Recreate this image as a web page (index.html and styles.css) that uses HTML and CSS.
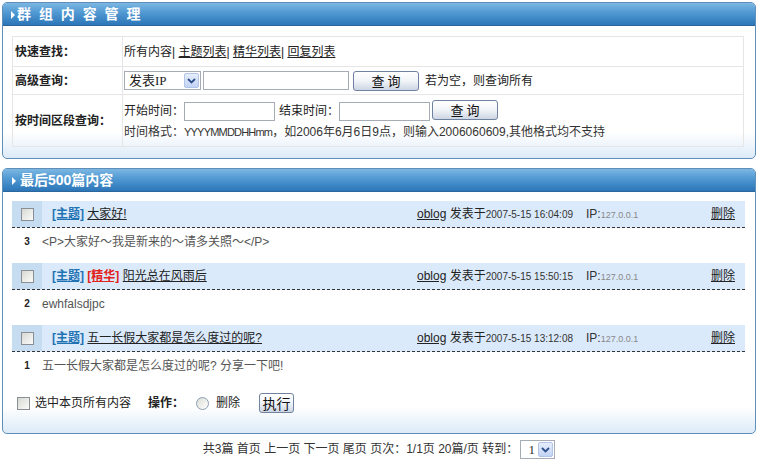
FILE: index.html
```html
<!doctype html>
<html>
<head>
	<meta charset="utf-8"/>
	<title>群组内容管理</title>
	<link rel="stylesheet" href="styles.css">
</head>
<body>

	<div class="panel">
		<div class="panel-title"><span class="tri"></span>群 组 内 容 管 理</div>
		<div class="panel-body">
			<table class="search">
				<tr class="row-quick">
					<td class="label">快速查找：</td>
					<td>所有内容| <a href="#">主题列表</a>| <a href="#">精华列表</a>| <a href="#">回复列表</a></td>
				</tr>
				<tr class="row-adv">
					<td class="label">高级查询：</td>
					<td>
						<div class="line">
							<span class="select select-ip"><span class="select-text">发表IP</span><span class="select-btn"><svg width="9" height="6" viewBox="0 0 9 6"><path d="M1 1 L4.5 4.5 L8 1" fill="none" stroke="#2d4f8a" stroke-width="1.8"/></svg></span></span>
							<input type="text" class="txt txt-key"/>
							<button class="btn btn-query">查 询</button>
							<span class="hint">若为空，则查询所有</span>
						</div>
					</td>
				</tr>
				<tr class="row-time">
					<td class="label">按时间区段查询：</td>
					<td>
						<div class="line">
							开始时间：<input type="text" class="txt txt-time"/>
							<span class="gap">结束时间：</span><input type="text" class="txt txt-time"/>
							<button class="btn btn-query btn-time">查 询</button>
						</div>
						<div class="line note">时间格式：<span class="fmt">YYYYMMDDHHmm</span>，如2006年6月6日9点，则输入2006060609,其他格式均不支持</div>
					</td>
				</tr>
			</table>
		</div>
	</div>

	<div class="panel panel-list">
		<div class="panel-title title-list"><span class="tri"></span>最后500篇内容</div>
		<div class="panel-body">

			<div class="post">
				<div class="post-head">
					<div class="cell-check"><span class="cb"></span></div>
					<div class="post-title"><a href="#" class="tag">[主题]</a> <a href="#">大家好!</a></div>
					<div class="post-author"><a href="#">oblog</a> 发表于<span class="date">2007-5-15 16:04:09</span></div>
					<div class="post-ip">IP:<span class="ip">127.0.0.1</span></div>
					<div class="post-del"><a href="#">删除</a></div>
				</div>
				<div class="post-body">
					<div class="num">3</div>
					<div class="text">&lt;P&gt;大家好～我是新来的～请多关照～&lt;/P&gt;</div>
				</div>
			</div>

			<div class="post">
				<div class="post-head">
					<div class="cell-check"><span class="cb"></span></div>
					<div class="post-title"><a href="#" class="tag">[主题]</a> <a href="#" class="tag tag-best">[精华]</a> <a href="#">阳光总在风雨后</a></div>
					<div class="post-author"><a href="#">oblog</a> 发表于<span class="date">2007-5-15 15:50:15</span></div>
					<div class="post-ip">IP:<span class="ip">127.0.0.1</span></div>
					<div class="post-del"><a href="#">删除</a></div>
				</div>
				<div class="post-body">
					<div class="num">2</div>
					<div class="text">ewhfalsdjpc</div>
				</div>
			</div>

			<div class="post">
				<div class="post-head">
					<div class="cell-check"><span class="cb"></span></div>
					<div class="post-title"><a href="#" class="tag">[主题]</a> <a href="#">五一长假大家都是怎么度过的呢?</a></div>
					<div class="post-author"><a href="#">oblog</a> 发表于<span class="date">2007-5-15 13:12:08</span></div>
					<div class="post-ip">IP:<span class="ip">127.0.0.1</span></div>
					<div class="post-del"><a href="#">删除</a></div>
				</div>
				<div class="post-body">
					<div class="num">1</div>
					<div class="text">五一长假大家都是怎么度过的呢? 分享一下吧!</div>
				</div>
			</div>

			<div class="actions">
				<span class="cb cb-all"></span>
				<span>选中本页所有内容</span>
				<b class="op">操作：</b>
				<span class="radio"></span>
				<span>删除</span>
				<button class="btn btn-run">执行</button>
			</div>
		</div>
	</div>

	<div class="pager">
		共3篇 首页 上一页 下一页 尾页 页次：1/1页 20篇/页 转到：<span class="select select-page"><span class="select-text">1</span><span class="select-btn"><svg width="9" height="6" viewBox="0 0 9 6"><path d="M1 1 L4.5 4.5 L8 1" fill="none" stroke="#2d4f8a" stroke-width="1.8"/></svg></span></span>
	</div>

</body>
</html>
```

FILE: styles.css
```css
body {
	margin: 2px;
	font-family: "Liberation Sans", "Noto Sans CJK SC", sans-serif;
	font-size: 12px;
	line-height: 16px;
	color: #222;
	background: #fff;
}
a {
	color: #222;
	text-decoration: underline;
}

/* panels */
.panel {
	width: 752px;
	border: 1px solid #5f8fb9;
	border-radius: 5px;
	overflow: hidden;
	background: linear-gradient(to bottom, #fff calc(100% - 26px), #dcebf8);
}
.panel-list {
	margin-top: 9px;
}
.panel-title {
	height: 22px;
	line-height: 22px;
	padding-left: 8px;
	border-bottom: 1px solid #2b679c;
	background: linear-gradient(to bottom, #7cb7e2, #4f98d2 45%, #2c76b8);
	color: #fff;
	font-size: 14px;
	font-weight: bold;
	letter-spacing: 2px;
}
.title-list {
	letter-spacing: 0;
}
.tri {
	display: inline-block;
	width: 0;
	height: 0;
	border-left: 4px solid #fff;
	border-top: 4px solid transparent;
	border-bottom: 4px solid transparent;
	margin-right: 2px;
	vertical-align: 0;
}
.title-list .tri {
	margin-right: 4px;
	margin-left: 1px;
}
.panel-body {
	padding: 10px 10px 11px 9px;
}
.panel-list .panel-body {
	padding: 9px 10px 17px 9px;
}

/* search table */
.search {
	width: 732px;
	border-collapse: collapse;
}
.search td {
	border: 1px solid #e6e6e6;
	padding: 0 0 0 1px;
	vertical-align: middle;
}
.search td.label {
	width: 107px;
	padding-left: 2px;
	font-weight: bold;
}
.row-quick td {
	height: 29px;
}
.row-adv td {
	height: 27px;
}
.row-time td {
	height: 51px;
}
.line {
	display: flex;
	align-items: center;
	white-space: nowrap;
}
.note {
	margin-top: 3px;
	color: #333;
}
.fmt {
	font-size: 11px;
	letter-spacing: -0.8px;
}
.gap {
	margin-left: 4px;
}
.hint {
	margin-left: 6px;
}

.txt {
	box-sizing: border-box;
	height: 19px;
	border: 1px solid #a5acb5;
	margin: 0;
	padding: 0 2px;
}
.txt-key {
	width: 146px;
	margin-left: 2px;
}
.txt-time {
	width: 91px;
}

.select {
	box-sizing: border-box;
	display: inline-flex;
	align-items: center;
	height: 19px;
	border: 1px solid #a5acb5;
	background: #fff;
	padding: 1px;
	font-family: "Liberation Serif", "Noto Sans CJK SC", serif;
	font-size: 13px;
}
.select-ip {
	width: 77px;
}
.select-text {
	flex: 1;
	padding-left: 3px;
}
.select-btn {
	box-sizing: border-box;
	width: 15px;
	height: 15px;
	border: 1px solid #b2c5e6;
	border-radius: 2px;
	background: linear-gradient(to bottom, #e6eefc, #c1d3f5);
	display: flex;
	align-items: center;
	justify-content: center;
}

.btn {
	box-sizing: border-box;
	height: 20px;
	border: 1px solid #6f82a0;
	border-radius: 3px;
	background: linear-gradient(to bottom, #fff, #f1f4f8 50%, #cdd6e3);
	font-family: "Noto Sans CJK SC", sans-serif;
	font-size: 13px;
	line-height: 16px;
	padding: 0;
	color: #111;
}
.btn-query {
	width: 66px;
	margin-left: 4px;
}
.btn-time {
	margin-left: 2px;
	margin-top: -3px;
}

/* post list */
.post {
	margin-bottom: 8px;
}
.post-head {
	height: 26px;
	display: flex;
	align-items: center;
	background: #dbeafb;
	border-bottom: 1px dashed #333;
}
.cell-check {
	width: 30px;
	height: 26px;
	background: #c6dcf1;
	display: flex;
	align-items: center;
	justify-content: center;
}
.cb {
	display: inline-block;
	box-sizing: border-box;
	width: 13px;
	height: 13px;
	border: 1px solid #8a8f95;
	background: linear-gradient(135deg, #d8d8d2, #fbfbfa);
}
.post-title {
	flex: 1;
	padding-left: 10px;
	white-space: nowrap;
}
.tag {
	color: #1f73b3;
	font-weight: bold;
}
.tag-best {
	color: #e2231a;
}
.post-author {
	width: 169px;
	white-space: nowrap;
}
.date {
	font-size: 10px;
	color: #333;
}
.post-ip {
	width: 125px;
	color: #333;
	white-space: nowrap;
}
.ip {
	font-size: 9px;
	color: #888;
}
.post-del {
	width: 24px;
	margin-right: 10px;
	white-space: nowrap;
}
.post-body {
	height: 27px;
	display: flex;
	align-items: center;
}
.num {
	width: 30px;
	text-align: center;
	font-size: 10px;
	font-weight: bold;
}
.text {
	color: #555;
}
.post:last-of-type {
	margin-bottom: 0;
}

/* bottom actions */
.actions {
	margin-top: 11px;
	height: 26px;
	display: flex;
	align-items: center;
	padding-left: 5px;
	white-space: nowrap;
}
.cb-all {
	margin-right: 5px;
}
.op {
	margin-left: 17px;
	margin-right: 12px;
}
.radio {
	box-sizing: border-box;
	width: 13px;
	height: 13px;
	border: 1px solid #8a9db3;
	border-radius: 50%;
	background: linear-gradient(135deg, #dcdcd6, #fff);
	margin-right: 7px;
}
.btn-run {
	width: 35px;
	height: 20px;
	margin-left: 19px;
	font-size: 14px;
}

/* pager */
.pager {
	margin-top: 6px;
	text-align: center;
	color: #333;
	white-space: nowrap;
}
.select-page {
	width: 35px;
	margin-left: 2px;
	vertical-align: middle;
	font-size: 13px;
}
```
